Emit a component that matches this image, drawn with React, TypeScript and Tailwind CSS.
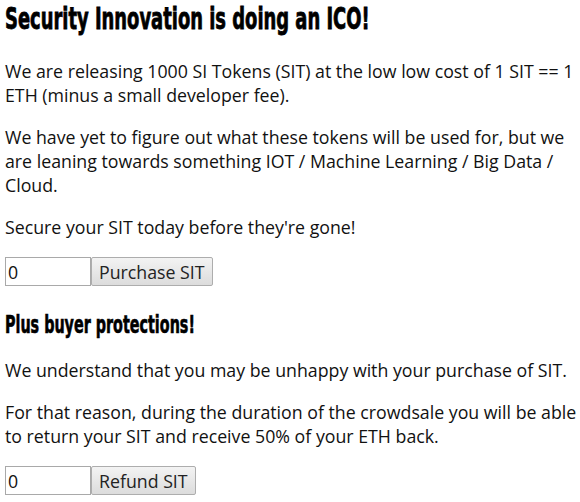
export default function App() {
  return (
    <main className="min-h-[502px] bg-white pl-[5px] pr-[2px] font-['Open_Sans',sans-serif] text-[17.75px] leading-[24px] text-[#111]">
      <h1 className="pt-[2px] font-['DejaVu_Sans',sans-serif] text-[30px] font-bold leading-[34px] text-black font-stretch-condensed [-webkit-text-stroke:0.8px_black]">
        <span className="inline-block origin-left scale-x-[0.664] whitespace-nowrap">
          Security Innovation is doing an ICO!
        </span>
      </h1>

      <p className="mt-[23px]">
        We are releasing 1000 SI Tokens (SIT) at the low low cost of 1 SIT == 1 ETH (minus a small developer fee).
      </p>

      <p className="mt-[18px]">
        We have yet to figure out what these tokens will be used for, but we are leaning towards something IOT / Machine Learning / Big Data / Cloud.
      </p>

      <p className="mt-[18px]">Secure your SIT today before they're gone!</p>

      <div className="mt-[18px] flex">
        <input
          defaultValue="0"
          className="h-[29px] w-[86px] border border-[#a9a9a9] px-[2px] text-[17.75px]"
        />
        <button className="h-[29px] rounded-[2px] border border-[#adadad] bg-gradient-to-b from-[#f3f3f3] to-[#dcdcdc] px-[7px] text-[17.75px] text-[#222]">
          Purchase SIT
        </button>
      </div>

      <h2 className="mt-[25px] font-['DejaVu_Sans',sans-serif] text-[24px] font-bold leading-[28px] text-black font-stretch-condensed [-webkit-text-stroke:0.6px_black]">
        <span className="inline-block origin-left scale-x-[0.664] whitespace-nowrap">
          Plus buyer protections!
        </span>
      </h2>

      <p className="mt-[19px]">
        We understand that you may be unhappy with your purchase of SIT.
      </p>

      <p className="mt-[18px]">
        For that reason, during the duration of the crowdsale you will be able to return your SIT and receive 50% of your ETH back.
      </p>

      <div className="mt-[18px] flex">
        <input
          defaultValue="0"
          className="h-[29px] w-[86px] border border-[#a9a9a9] px-[2px] text-[17.75px]"
        />
        <button className="h-[29px] rounded-[2px] border border-[#adadad] bg-gradient-to-b from-[#f3f3f3] to-[#dcdcdc] px-[7px] text-[17.75px] text-[#222]">
          Refund SIT
        </button>
      </div>
    </main>
  );
}
